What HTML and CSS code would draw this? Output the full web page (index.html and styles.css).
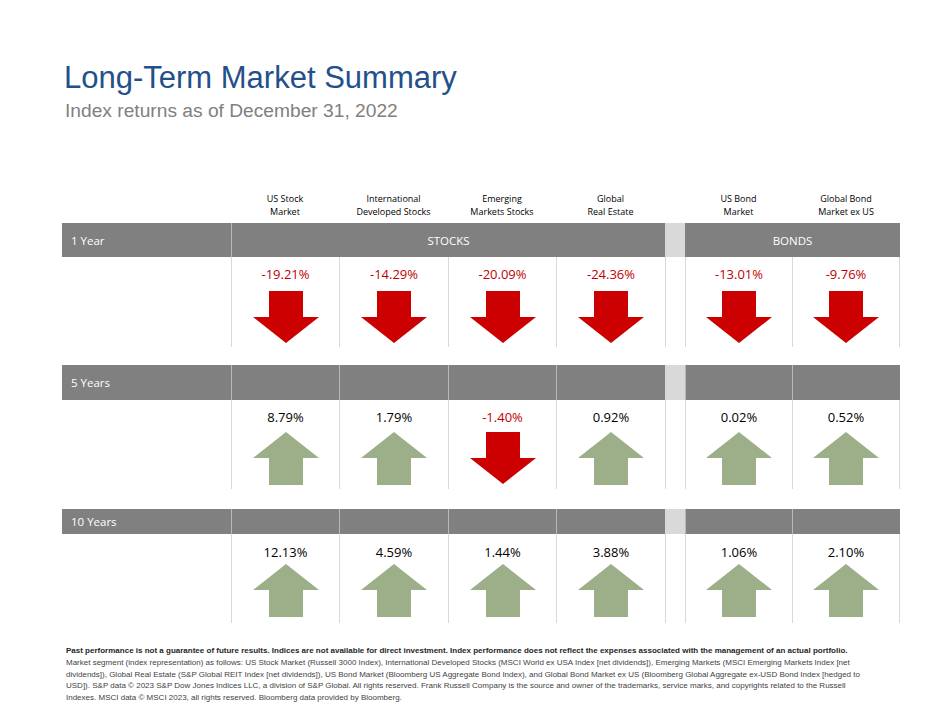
FILE: index.html
```html
<!DOCTYPE html>
<html lang="en">
<head>
<meta charset="utf-8">
<title>Long-Term Market Summary</title>
<link rel="stylesheet" href="styles.css">
</head>
<body>
<svg width="0" height="0" class="defs" aria-hidden="true">
  <defs>
    <symbol id="down" viewBox="0 0 66 52"><polygon points="16,0 50,0 50,26 66,26 33,52 0,26 16,26"/></symbol>
    <symbol id="up" viewBox="0 0 66 53"><polygon points="33,0 66,26 50,26 50,53 16,53 16,26 0,26"/></symbol>
  </defs>
</svg>
<main class="page">
  <header class="heading">
    <h1 class="title">Long-Term Market Summary</h1>
    <p class="subtitle">Index returns as of December 31, 2022</p>
  </header>

  <section class="table">
    <div class="grid colheads">
      <div></div>
      <div class="colhead">US Stock<br>Market</div>
      <div class="colhead">International<br>Developed Stocks</div>
      <div class="colhead">Emerging<br>Markets Stocks</div>
      <div class="colhead">Global<br>Real Estate</div>
      <div></div>
      <div class="colhead">US Bond<br>Market</div>
      <div class="colhead">Global Bond<br>Market ex US</div>
    </div>

    <div class="grid bar bar-1y">
      <div class="bar-label">1 Year</div>
      <div class="bar-cell span-stocks">STOCKS</div>
      <div class="bar-gap"></div>
      <div class="bar-cell span-bonds">BONDS</div>
    </div>
    <div class="grid cells cells-1y">
      <div class="label-cell"></div>
      <div class="cell"><span class="pct neg">-19.21%</span><svg class="arrow down"><use href="#down"/></svg></div>
      <div class="cell"><span class="pct neg">-14.29%</span><svg class="arrow down"><use href="#down"/></svg></div>
      <div class="cell"><span class="pct neg">-20.09%</span><svg class="arrow down"><use href="#down"/></svg></div>
      <div class="cell"><span class="pct neg">-24.36%</span><svg class="arrow down"><use href="#down"/></svg></div>
      <div class="cell gap"></div>
      <div class="cell"><span class="pct neg">-13.01%</span><svg class="arrow down"><use href="#down"/></svg></div>
      <div class="cell last"><span class="pct neg">-9.76%</span><svg class="arrow down"><use href="#down"/></svg></div>
    </div>

    <div class="grid bar bar-5y">
      <div class="bar-label">5 Years</div>
      <div class="bar-cell"></div>
      <div class="bar-cell"></div>
      <div class="bar-cell"></div>
      <div class="bar-cell"></div>
      <div class="bar-gap"></div>
      <div class="bar-cell"></div>
      <div class="bar-cell"></div>
    </div>
    <div class="grid cells cells-5y">
      <div class="label-cell"></div>
      <div class="cell"><span class="pct">8.79%</span><svg class="arrow up"><use href="#up"/></svg></div>
      <div class="cell"><span class="pct">1.79%</span><svg class="arrow up"><use href="#up"/></svg></div>
      <div class="cell"><span class="pct neg">-1.40%</span><svg class="arrow down"><use href="#down"/></svg></div>
      <div class="cell"><span class="pct">0.92%</span><svg class="arrow up"><use href="#up"/></svg></div>
      <div class="cell gap"></div>
      <div class="cell"><span class="pct">0.02%</span><svg class="arrow up"><use href="#up"/></svg></div>
      <div class="cell last"><span class="pct">0.52%</span><svg class="arrow up"><use href="#up"/></svg></div>
    </div>

    <div class="grid bar bar-10y">
      <div class="bar-label">10 Years</div>
      <div class="bar-cell"></div>
      <div class="bar-cell"></div>
      <div class="bar-cell"></div>
      <div class="bar-cell"></div>
      <div class="bar-gap"></div>
      <div class="bar-cell"></div>
      <div class="bar-cell"></div>
    </div>
    <div class="grid cells cells-10y">
      <div class="label-cell"></div>
      <div class="cell"><span class="pct">12.13%</span><svg class="arrow up"><use href="#up"/></svg></div>
      <div class="cell"><span class="pct">4.59%</span><svg class="arrow up"><use href="#up"/></svg></div>
      <div class="cell"><span class="pct">1.44%</span><svg class="arrow up"><use href="#up"/></svg></div>
      <div class="cell"><span class="pct">3.88%</span><svg class="arrow up"><use href="#up"/></svg></div>
      <div class="cell gap"></div>
      <div class="cell"><span class="pct">1.06%</span><svg class="arrow up"><use href="#up"/></svg></div>
      <div class="cell last"><span class="pct">2.10%</span><svg class="arrow up"><use href="#up"/></svg></div>
    </div>
  </section>

  <footer class="notes">
    <p class="note-line note-bold">Past performance is not a guarantee of future results. Indices are not available for direct investment. Index performance does not reflect the expenses associated with the management of an actual portfolio.</p>
    <p class="note-line">Market segment (index representation) as follows: US Stock Market (Russell 3000 Index), International Developed Stocks (MSCI World ex USA Index [net dividends]), Emerging Markets (MSCI Emerging Markets Index [net</p>
    <p class="note-line">dividends]), Global Real Estate (S&amp;P Global REIT Index [net dividends]), US Bond Market (Bloomberg US Aggregate Bond Index), and Global Bond Market ex US (Bloomberg Global Aggregate ex-USD Bond Index [hedged to</p>
    <p class="note-line">USD]). S&amp;P data © 2023 S&amp;P Dow Jones Indices LLC, a division of S&amp;P Global. All rights reserved. Frank Russell Company is the source and owner of the trademarks, service marks, and copyrights related to the Russell</p>
    <p class="note-line">Indexes. MSCI data © MSCI 2023, all rights reserved. Bloomberg data provided by Bloomberg.</p>
  </footer>
</main>
</body>
</html>
```

FILE: styles.css
```css
* { box-sizing: border-box; }

html, body {
  margin: 0;
  padding: 0;
  background: #ffffff;
}

.defs {
  position: absolute;
  width: 0;
  height: 0;
  overflow: hidden;
}

.page {
  width: 952px;
  height: 720px;
  padding: 60px 0 0 62px;
  font-family: "Open Sans", "Liberation Sans", sans-serif;
  color: #000;
}

.heading {
  padding-left: 2px;
}

.title {
  margin: 0;
  font-family: "Liberation Sans", Arial, sans-serif;
  font-weight: normal;
  font-size: 31px;
  line-height: 36px;
  color: #24508a;
}

.subtitle {
  margin: 4px 0 0 1px;
  font-family: "Liberation Sans", Arial, sans-serif;
  font-size: 19.2px;
  line-height: 22px;
  color: #808080;
}

.table {
  margin-top: 70px;
  width: 838px;
}

.grid {
  display: grid;
  grid-template-columns: 169px 108px 109px 108px 109px 20px 107px 108px;
}

.colheads {
  height: 31px;
}

.colhead {
  text-align: center;
  font-size: 9px;
  line-height: 13px;
  color: #000;
}

/* gray period bars */
.bar {
  background: #808080;
  color: #ffffff;
  font-size: 11.5px;
}
.bar-1y { height: 34px; }
.bar-5y { height: 35px; margin-top: 18px; }
.bar-10y { height: 25px; margin-top: 20px; }

.bar-label {
  display: flex;
  align-items: center;
  padding-left: 9px;
}

.bar-cell {
  border-left: 1px solid #b8b8b8;
  display: flex;
  align-items: center;
  justify-content: center;
}

.span-stocks { grid-column: 2 / 6; }
.span-bonds { grid-column: 7 / 9; border-left: none; }

.bar-gap {
  background: #d9d9d9;
}

/* value cells */
.cells-1y { height: 90px; }
.cells-5y { height: 89px; }
.cells-10y { height: 89px; }

.cell {
  border-left: 1px solid #d9d9d9;
  display: flex;
  flex-direction: column;
  align-items: center;
}
.cell.last {
  border-right: 1px solid #d9d9d9;
}

.pct {
  font-size: 13px;
  line-height: 18px;
  color: #000;
}
.pct.neg {
  color: #c00000;
}

.cells-1y .cell { padding-top: 8px; }
.cells-1y .arrow { margin-top: 8px; }
.cells-5y .cell { padding-top: 8px; }
.cells-5y .arrow { margin-top: 6px; }
.cells-10y .cell { padding-top: 9px; }
.cells-10y .arrow { margin-top: 3px; }

.arrow {
  width: 66px;
  height: 52px;
  display: block;
}
.arrow.down { fill: #cc0000; }
.arrow.up { fill: #9caf88; height: 53px; }

/* footnotes */
.notes {
  margin-top: 22px;
  padding-left: 4px;
  font-family: "Liberation Sans", Arial, sans-serif;
  font-size: 8px;
  line-height: 11.75px;
  color: #3f3f3f;
}

.note-line {
  margin: 0;
  white-space: nowrap;
}

.note-bold {
  font-weight: bold;
  color: #262626;
}
```
